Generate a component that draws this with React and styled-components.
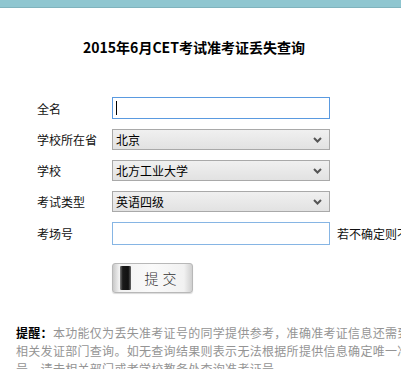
import styled, { createGlobalStyle } from "styled-components";

const GlobalStyle = createGlobalStyle`
    html, body {
        margin: 0;
        padding: 0;
        background: #ffffff;
        overflow: hidden;
    }
    body {
        font-family: "Noto Sans CJK SC", "Liberation Sans", sans-serif;
    }
`

const TopBar = styled.div`
    height: 7px;
    background-color: #8fc6d0;
    border-bottom: 1px solid #7fb3bd;
`

const Page = styled.div`
    width: 560px;
`

const Title = styled.h1`
    width: 388px;
    margin: 0;
    padding-top: 28px;
    height: 22px;
    line-height: 22px;
    text-align: center;
    font-size: 14px;
    font-weight: 700;
    color: #000000;
    font-family: "Noto Sans CJK SC", "Liberation Sans", sans-serif;
`

const Form = styled.div`
    display: flex;
    flex-direction: column;
    gap: 10px;
    padding: 39px 0 0 37px;
`

const Row = styled.div`
    display: flex;
    align-items: center;
    height: ${({ h }) => h || 22}px;
    white-space: nowrap;
`

const Label = styled.span`
    width: 75px;
    font-size: 12px;
    color: #111111;
`

const TextInput = styled.div`
    box-sizing: border-box;
    width: 218px;
    height: 100%;
    border: 1px solid ${({ focused }) => (focused ? "#5a9ae0" : "#86b5e4")};
    background: #ffffff;
    display: flex;
    align-items: center;
    padding-left: 3px;
`

const Caret = styled.span`
    width: 1px;
    height: 14px;
    background: #000000;
`

const Select = styled.div`
    box-sizing: border-box;
    width: 218px;
    height: 100%;
    border: 1px solid #a9a9a9;
    background: linear-gradient(#f0f0f0, #e2e2e2);
    display: flex;
    align-items: center;
    justify-content: space-between;
    padding: 0 7px 0 3px;
    font-size: 12px;
    color: #000000;
`

const Hint = styled.span`
    margin-left: 7px;
    font-size: 12px;
    color: #111111;
`

const SubmitButton = styled.button`
    box-sizing: border-box;
    margin: 18px 0 0 112px;
    width: 81px;
    height: 30px;
    padding: 0;
    border: 1px solid #b8b8b8;
    border-radius: 3px;
    background: linear-gradient(90deg, #c9c9c9 0%, #f2f2f2 8%, #fafafa 50%, #f1f1f1 90%, #cfcfcf 100%);
    display: flex;
    align-items: stretch;
    box-shadow: 0 1px 1px rgba(0, 0, 0, 0.15);
`

const ButtonGrip = styled.span`
    margin: 2px 0 2px 7px;
    width: 11px;
    background: linear-gradient(90deg, #777 0%, #1a1a1a 25%, #111 75%, #666 100%);
    border-radius: 1px;
`

const ButtonText = styled.span`
    flex: 1;
    display: flex;
    align-items: center;
    justify-content: center;
    font-size: 14px;
    letter-spacing: 4px;
    padding-left: 2px;
    color: #333333;
    font-family: "Noto Sans CJK SC", serif;
    font-weight: 300;
`

const Notice = styled.p`
    margin: 31px 0 0 16px;
    font-size: 12px;
    line-height: 18px;
    letter-spacing: 0.3px;
    color: #949494;
    width: 530px;
    white-space: pre-line;

    b {
        color: #000000;
        font-weight: 700;
    }
`

const Chevron = () => (
    <svg width="9" height="6" viewBox="0 0 9 6">
        <path d="M1 1 L4.5 4.5 L8 1" stroke="#555" strokeWidth="2" fill="none" />
    </svg>
)

const App = () => {
    return (
        <>
            <GlobalStyle />
            <TopBar />
            <Page>
                <Title>2015年6月CET考试准考证丢失查询</Title>
                <Form>
                    <Row>
                        <Label>全名</Label>
                        <TextInput focused><Caret /></TextInput>
                    </Row>
                    <Row h={21}>
                        <Label>学校所在省</Label>
                        <Select>北京<Chevron /></Select>
                    </Row>
                    <Row h={21}>
                        <Label>学校</Label>
                        <Select>北方工业大学<Chevron /></Select>
                    </Row>
                    <Row h={21}>
                        <Label>考试类型</Label>
                        <Select>英语四级<Chevron /></Select>
                    </Row>
                    <Row h={23}>
                        <Label>考场号</Label>
                        <TextInput />
                        <Hint>若不确定则不填</Hint>
                    </Row>
                </Form>
                <SubmitButton>
                    <ButtonGrip />
                    <ButtonText>提交</ButtonText>
                </SubmitButton>
                <Notice>
                    <b>提醒：</b>本功能仅为丢失准考证号的同学提供参考，准确准考证信息还需到学校
                    {"\n"}相关发证部门查询。如无查询结果则表示无法根据所提供信息确定唯一准考证
                    {"\n"}号，请去相关部门或者学校教务处查询准考证号。
                </Notice>
            </Page>
        </>
    )
}

export default App;
